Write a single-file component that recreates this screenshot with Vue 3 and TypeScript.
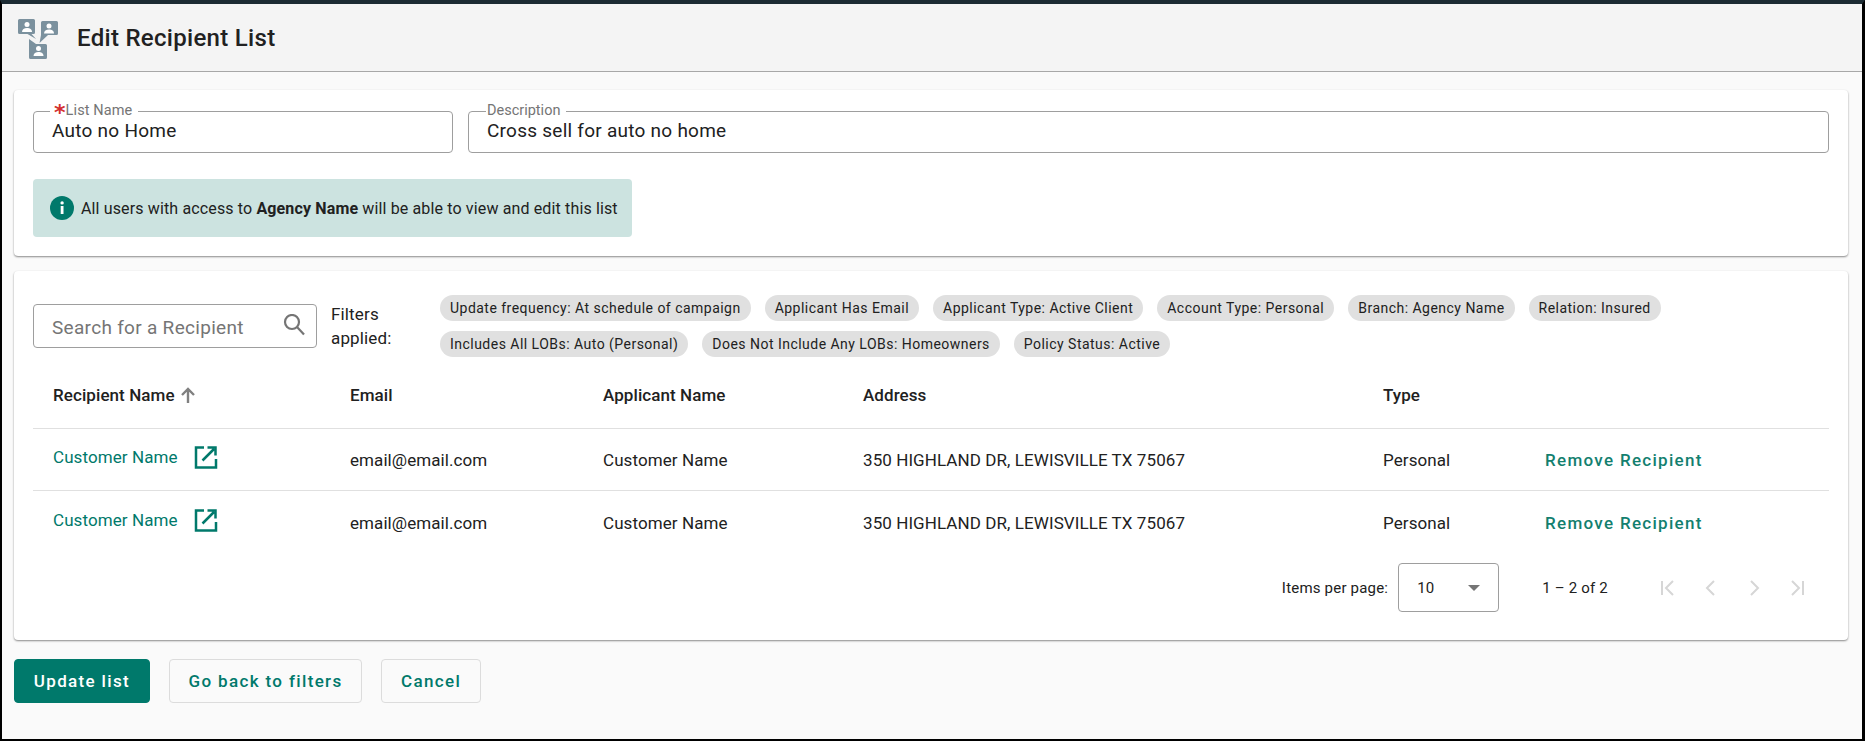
<script setup lang="ts">
interface Recipient { name: string; email: string; applicant: string; address: string; type: string }
const row1 = ['Update frequency: At schedule of campaign', 'Applicant Has Email', 'Applicant Type: Active Client', 'Account Type: Personal', 'Branch: Agency Name', 'Relation: Insured']
const row2 = ['Includes All LOBs: Auto (Personal)', 'Does Not Include Any LOBs: Homeowners', 'Policy Status: Active']
const rows: Recipient[] = [
  { name: 'Customer Name', email: 'email@email.com', applicant: 'Customer Name', address: '350 HIGHLAND DR, LEWISVILLE TX 75067', type: 'Personal' },
  { name: 'Customer Name', email: 'email@email.com', applicant: 'Customer Name', address: '350 HIGHLAND DR, LEWISVILLE TX 75067', type: 'Personal' },
]
</script>

<template>
  <div class="frame">
    <header class="top">
      <svg class="logo" width="42" height="42" viewBox="0 0 42 42">
        <g fill="#7b919e">
          <path d="M1.500 2h14a1.500 1.500 0 0 1 1.500 1.500v12a1.500 1.500 0 0 1-1.500 1.500H13.500l4.500 5-8.500-5h-8A1.500 1.500 0 0 1 0 15.500v-12A1.500 1.500 0 0 1 1.500 2z"/>
          <path d="M24.500 4h14a1.500 1.500 0 0 1 1.500 1.500v11a1.500 1.500 0 0 1-1.500 1.500H30l-8.500 8L23 18V5.500A1.500 1.500 0 0 1 24.500 4z"/>
          <path d="M11 22l7 5h9.500a1.500 1.500 0 0 1 1.500 1.500v12a1.500 1.500 0 0 1-1.500 1.500h-15a1.500 1.500 0 0 1-1.500-1.500z"/>
        </g>
        <g fill="#fff">
          <circle cx="9" cy="7.500" r="2.500"/><path d="M4 15c0-2.800 2.200-4 5-4s5 1.200 5 4z"/>
          <circle cx="31" cy="9" r="2.500"/><path d="M26 16.500c0-2.800 2.200-4 5-4s5 1.200 5 4z"/>
          <circle cx="20.500" cy="31.500" r="2.500"/><path d="M15.500 39c0-2.800 2.200-4 5-4s5 1.200 5 4z"/>
        </g>
      </svg>
      <h1 class="title">Edit Recipient List</h1>
    </header>

    <main class="content">
      <section class="card card-form">
        <div class="fields">
          <fieldset class="field name-field">
            <legend class="required">List Name</legend>
            <span class="value">Auto no Home</span>
          </fieldset>
          <fieldset class="field desc-field">
            <legend>Description</legend>
            <span class="value">Cross sell for auto no home</span>
          </fieldset>
        </div>
        <div class="notice">
          <svg width="24" height="24" viewBox="0 0 24 24">
            <circle cx="12" cy="12" r="12" fill="#00796b"/>
            <rect x="10.700" y="10" width="2.800" height="8" fill="#fff"/>
            <circle cx="12.100" cy="6.900" r="1.700" fill="#fff"/>
          </svg>
          <span>All users with access to <b>Agency Name</b> will be able to view and edit this list</span>
        </div>
      </section>

      <section class="card card-table">
        <div class="toolbar">
          <div class="search">
            <span class="placeholder">Search for a Recipient</span>
            <svg width="24" height="24" viewBox="0 0 24 24" fill="none" stroke="#757575" stroke-width="2.200">
              <circle cx="11" cy="8" r="7"/><path d="M16 13l7 7.500"/>
            </svg>
          </div>
          <div class="filters-label">Filters applied:</div>
          <div class="chips">
            <div class="chip-row"><span v-for="c in row1" :key="c" class="chip">{{ c }}</span></div>
            <div class="chip-row"><span v-for="c in row2" :key="c" class="chip">{{ c }}</span></div>
          </div>
        </div>

        <div class="grid head">
          <div class="th th-sort">Recipient Name
            <svg width="18" height="18" viewBox="0 0 18 18" fill="none" stroke="#808080" stroke-width="2.400"><path d="M9 17V3M3 9l6-6 6 6"/></svg>
          </div>
          <div class="th">Email</div>
          <div class="th">Applicant Name</div>
          <div class="th">Address</div>
          <div class="th">Type</div>
          <div></div>
        </div>
        <div class="rows">
          <div v-for="(r, i) in rows" :key="i" class="grid body-row">
            <div class="name-cell">
              <span class="link">{{ r.name }}</span>
              <svg width="24" height="24" viewBox="0 0 24 24" fill="none" stroke="#00796b" stroke-width="2.500">
                <path d="M10 2.500H2v20h20V14"/><path d="M8.500 15.500 20 4M13.500 2.500h8v8"/>
              </svg>
            </div>
            <div>{{ r.email }}</div>
            <div>{{ r.applicant }}</div>
            <div>{{ r.address }}</div>
            <div>{{ r.type }}</div>
            <div class="remove">Remove Recipient</div>
          </div>
        </div>

        <div class="pager">
          <span class="per">Items per page:</span>
          <div class="select"><span>10</span><i class="caret"></i></div>
          <span class="range">1 – 2 of 2</span>
          <div class="nav">
            <svg width="24" height="24" viewBox="0 0 24 24" fill="none" stroke="#d6d6d6" stroke-width="2"><path d="M6 5v14M17 5l-7 7 7 7"/></svg>
            <svg width="24" height="24" viewBox="0 0 24 24" fill="none" stroke="#d6d6d6" stroke-width="2"><path d="M15 5l-7 7 7 7"/></svg>
            <svg width="24" height="24" viewBox="0 0 24 24" fill="none" stroke="#d6d6d6" stroke-width="2"><path d="M9 5l7 7-7 7"/></svg>
            <svg width="24" height="24" viewBox="0 0 24 24" fill="none" stroke="#d6d6d6" stroke-width="2"><path d="M18 5v14M7 5l7 7-7 7"/></svg>
          </div>
        </div>
      </section>

      <div class="actions">
        <button class="btn primary">Update list</button>
        <button class="btn">Go back to filters</button>
        <button class="btn">Cancel</button>
      </div>
    </main>
  </div>
</template>

<style>
html, body { margin: 0; padding: 0; background: #fafafa; }
</style>

<style scoped>
.frame {
  box-sizing: border-box;
  width: 1865px;
  height: 741px;
  border-style: solid;
  border-color: #000;
  border-width: 4px 3px 2px 2px;
  border-top-color: #1c2b33;
  background: #fafafa;
  font-family: Roboto, sans-serif;
  color: #212121;
  overflow: hidden;
}
.top {
  display: flex;
  align-items: center;
  height: 67px;
  padding-left: 16px;
  gap: 17px;
  background: #f4f4f4;
  border-bottom: 1px solid #a8a8a8;
}
.logo { flex: none; }
.title { margin: 0; font-size: 24px; font-weight: 500; letter-spacing: 0.3px; }
.content { padding: 18px 12px 0 12px; }
.card {
  background: #fff;
  border-radius: 4px;
  box-shadow: 0 1px 2px rgba(0, 0, 0, 0.45);
  width: 1834px;
  box-sizing: border-box;
}
.card-form { height: 166px; padding: 14px 19px 0; margin-bottom: 15px; }
.fields { display: flex; gap: 15px; }
.field {
  box-sizing: border-box;
  height: 49px;
  margin: 0;
  padding: 0 18px;
  border: 1px solid #9e9e9e;
  border-radius: 4px;
  min-width: 0;
}
.name-field { width: 420px; }
.desc-field { flex: 1; }
.field legend {
  padding: 0 6px 0 1px;
  margin-left: -1px;
  font-size: 14.500px;
  line-height: 14px;
  color: #757575;
}
.field legend.required { margin-left: -2px; letter-spacing: 0.1px; }
.required::before {
  content: "*";
  font-family: "DejaVu Sans", sans-serif;
  color: #d32f2f;
  font-size: 22px;
  font-weight: 700;
  line-height: 10px;
  vertical-align: -5px;
  margin-left: 3px;
}
.value { display: block; font-size: 19px; letter-spacing: 0.25px; line-height: 24px; margin-top: 1px; }
.notice {
  display: flex;
  align-items: center;
  gap: 7px;
  width: 599px;
  height: 58px;
  box-sizing: border-box;
  margin-top: 26px;
  padding-left: 17px;
  background: #cce3e0;
  border-radius: 4px;
  font-size: 16px;
  letter-spacing: 0.14px;
}
.notice b { font-weight: 700; }
.card-table { height: 369px; padding: 24px 19px 0; }
.toolbar { display: flex; align-items: flex-start; }
.search {
  box-sizing: border-box;
  width: 284px;
  height: 44px;
  margin-top: 9px;
  padding: 0 11px 0 18px;
  border: 1px solid #9e9e9e;
  border-radius: 4px;
  display: flex;
  align-items: center;
  justify-content: space-between;
  flex: none;
}
.placeholder { font-size: 19px; letter-spacing: 0.3px; color: #757575; position: relative; top: 1px; }
.filters-label {
  width: 80px;
  margin-left: 14px;
  margin-top: 7px;
  font-size: 17px;
  letter-spacing: 0.15px;
  line-height: 24px;
  flex: none;
}
.chips { margin-left: 29px; display: flex; flex-direction: column; gap: 10px; }
.chip-row { display: flex; gap: 14px; }
.chip {
  height: 26px;
  line-height: 26px;
  padding: 0 10px;
  border-radius: 13px;
  background: #e0e0e0;
  font-size: 14px;
  letter-spacing: 0.475px;
  white-space: nowrap;
}
.grid {
  display: grid;
  grid-template-columns: 297px 253px 260px 520px 162px 1fr;
  padding-left: 20px;
  align-items: center;
  font-size: 17px;
  letter-spacing: 0.08px;
}
.head { height: 72px; font-weight: 500; border-bottom: 1px solid #e0e0e0; padding-top: 5px; box-sizing: border-box; }
.th-sort { display: flex; align-items: center; gap: 4px; }
.body-row { height: 62px; padding-top: 1px; box-sizing: border-box; }
.body-row:first-child { border-bottom: 1px solid #e0e0e0; }
.name-cell { display: flex; align-items: center; gap: 16px; margin-top: -6px; }
.link { color: #00796b; }
.remove { color: #137f6f; font-weight: 500; letter-spacing: 1.3px; }
.pager {
  display: flex;
  align-items: center;
  justify-content: flex-end;
  height: 49px;
  margin-top: 10px;
  font-size: 15px;
  letter-spacing: 0.2px;
}
.per { margin-right: 10px; }
.select {
  box-sizing: border-box;
  width: 101px;
  height: 49px;
  border: 1px solid #9e9e9e;
  border-radius: 4px;
  padding: 0 18px;
  display: flex;
  align-items: center;
  justify-content: space-between;
}
.caret { width: 0; height: 0; border-left: 6px solid transparent; border-right: 6px solid transparent; border-top: 6px solid #757575; }
.range { margin-left: 43px; margin-right: 48px; }
.nav { display: flex; gap: 19px; margin-right: 20px; }
.nav svg { display: block; }
.actions { display: flex; gap: 19px; margin-top: 19px; }
.btn {
  height: 44px;
  padding: 0 18.750px;
  border: 1px solid #dcdcdc;
  border-radius: 4px;
  background: #fafafa;
  color: #00796b;
  font-family: inherit;
  font-size: 17px;
  font-weight: 500;
  letter-spacing: 1.35px;
}
.btn.primary { background: #00796b; border-color: #00796b; color: #fff; }
</style>
